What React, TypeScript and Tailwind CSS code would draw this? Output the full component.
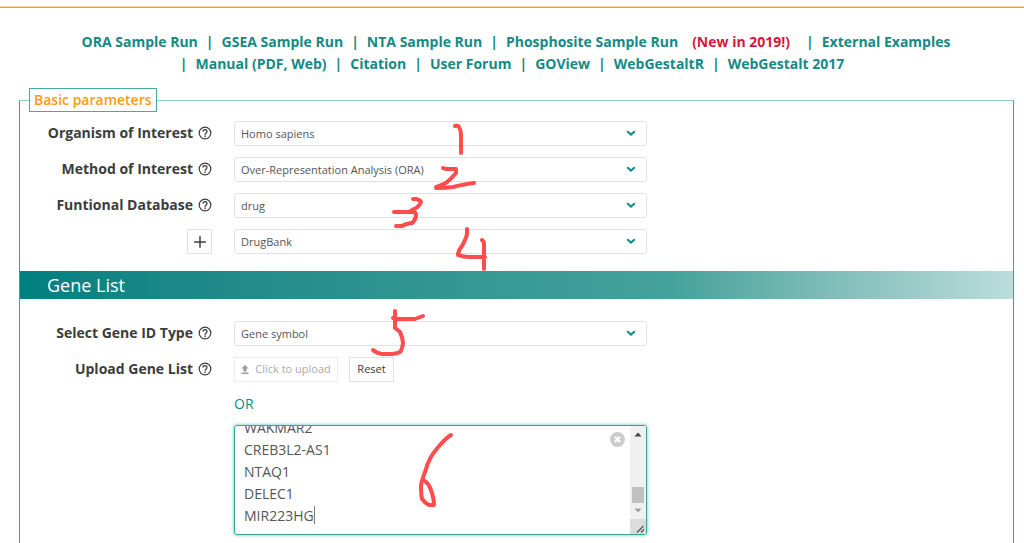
import { ReactNode, useEffect, useRef, useState } from "react";
import { Plus } from "lucide-react";

type FieldRowProps = {
  label?: string;
  htmlFor?: string;
  leading?: ReactNode;
  children: ReactNode;
};

type SelectFieldProps = {
  id: string;
  label: string;
  options: string[];
};

const SAMPLE_LINKS = ["ORA Sample Run", "GSEA Sample Run", "NTA Sample Run", "Phosphosite Sample Run"];
const RESOURCE_LINKS = ["Citation", "User Forum", "GOView", "WebGestaltR", "WebGestalt 2017"];
const GENES = ["WAKMAR2", "CREB3L2-AS1", "NTAQ1", "DELEC1", "MIR223HG"];

function Separator() {
  return <span aria-hidden="true">|</span>;
}

function TopNav() {
  return (
    <nav className="flex flex-col items-center pt-[23px] text-sm leading-[22px] font-bold text-[#148a84]">
      <div className="flex flex-wrap justify-center gap-x-2 pl-2">
        {SAMPLE_LINKS.map((name, index) => (
          <span key={name} className="flex gap-x-2">
            {index > 0 && <Separator />}
            <a href="#">{name}</a>
          </span>
        ))}
        <span className="mr-2 ml-[6px] text-[#dc143c]">(New in 2019!)</span>
        <Separator />
        <a href="#">External Examples</a>
      </div>
      <div className="flex flex-wrap justify-center gap-x-2">
        <Separator />
        <span>
          <a href="#">Manual</a> (<a href="#">PDF</a>, <a href="#">Web</a>)
        </span>
        {RESOURCE_LINKS.map((name) => (
          <span key={name} className="flex gap-x-2">
            <Separator />
            <a href="#">{name}</a>
          </span>
        ))}
      </div>
    </nav>
  );
}

function HelpIcon() {
  return (
    <svg viewBox="0 0 14 14" className="size-[14px] shrink-0" fill="none" stroke="currentColor">
      <circle cx="7" cy="7" r="5.8" strokeWidth="1.2" />
      <path d="M5 5.600a2 1.900 0 1 1 3.100 1.500Q7 7.700 7 8.700" strokeWidth="1.3" />
      <path d="M7 9.600v1.300" strokeWidth="1.3" />
    </svg>
  );
}

function FieldRow({ label, htmlFor, leading, children }: FieldRowProps) {
  return (
    <div className="grid grid-cols-[192px_minmax(0,413px)] items-center gap-x-[22px]">
      <div className="flex items-center justify-end">
        {leading}
        {label && (
          <div className="flex items-center gap-[5px] pb-[2px]">
            <label htmlFor={htmlFor} className="text-sm font-bold whitespace-nowrap">
              {label}
            </label>
            <HelpIcon />
          </div>
        )}
      </div>
      {children}
    </div>
  );
}

function Select({ id, label, options }: SelectFieldProps) {
  return (
    <div className="relative">
      <select
        id={id}
        aria-label={label}
        className="block h-[25px] w-full appearance-none rounded-[3px] border border-[#e2e2e2] bg-white pt-[2px] pr-8 pl-[6px] text-[11px] text-[#555]"
      >
        {options.map((option) => (
          <option key={option}>{option}</option>
        ))}
      </select>
      <svg
        viewBox="0 0 10 7"
        className="pointer-events-none absolute top-[9px] right-[11px] h-[7px] w-[10px] text-[#148a84]"
        fill="none"
        stroke="currentColor"
        strokeWidth="2"
      >
        <path d="M1.2 1.2 5 4.6 8.8 1.2" />
      </svg>
    </div>
  );
}

function GeneTextArea() {
  const [genes, setGenes] = useState(GENES.join("\n"));
  const areaRef = useRef<HTMLTextAreaElement>(null);

  // keep the end of the list in view
  useEffect(() => {
    if (areaRef.current) {
      areaRef.current.scrollTop = areaRef.current.scrollHeight;
    }
  }, []);

  return (
    <div className="relative flex h-[110px] overflow-hidden rounded-[3px] border border-[#3fa39d] shadow-[0_0_3px_1px_#a5d5d2]">
      <textarea
        id="gene-list"
        aria-label="Gene list"
        ref={areaRef}
        value={genes}
        onChange={(event) => setGenes(event.target.value)}
        spellCheck={false}
        className="h-full flex-1 resize-none overflow-hidden px-[9px] pt-1 pb-[7px] text-sm leading-[22px] text-[#555] outline-none"
      />
      <span className="absolute bottom-[10px] left-[79px] h-[18px] w-px bg-[#777]" />
      <button
        type="button"
        aria-label="Clear gene list"
        onClick={() => setGenes("")}
        className="absolute top-[6px] right-[21px]"
      >
        <svg viewBox="0 0 16 16" className="size-[15px]">
          <circle cx="8" cy="8" r="8" fill="#ccc" />
          <path d="m5.3 5.3 5.4 5.4m0-5.4-5.4 5.4" stroke="#fff" strokeWidth="2.4" />
        </svg>
      </button>
      <div className="flex w-4 flex-col items-center bg-[#f0f0f0]" aria-hidden="true">
        <svg viewBox="0 0 16 16" className="size-4">
          <path d="M4.5 10.5 8 6.5l3.500 4z" fill="#444" />
        </svg>
        <div className="mt-auto h-4 w-3 bg-[#c1c1c1]" />
        <svg viewBox="0 0 16 16" className="size-4">
          <path d="M4.500 5.500h7L8 9.500z" fill="#a0a0a0" />
        </svg>
        <div className="h-[15px] w-4 bg-[#dcdcdc]">
          <svg viewBox="0 0 16 15" className="h-[15px] w-4" stroke="#555" strokeWidth="1.3">
            <path d="M7 13.500 13.500 7M11 13.500l3-3" />
          </svg>
        </div>
      </div>
    </div>
  );
}

// Freehand step numbers drawn over the form
function StepMarks() {
  return (
    <svg
      viewBox="0 0 1024 543"
      className="pointer-events-none absolute top-0 left-0 h-[543px] w-[1024px]"
      fill="none"
      stroke="#ff0000"
      strokeOpacity="0.7"
      strokeWidth="4"
      strokeLinecap="round"
      strokeLinejoin="round"
    >
      <path d="M455 126q3-1 4 1 2 3 2 8v18" />
      <path d="M443 168q2 1 4 1h9v4q-4 5-10 10l-10 4v1q9 0 17-1 12-3 21-4" />
      <path d="M413 199h3q4 1 5 3-2 5-7 7l-5 3h-15 20q2 0 2 4-1 5-4 7-7 1-10 3h-6" />
      <path d="M467 229v5q-1 5-5 12-4 5-4 9 6 2 11 2h16M482 240q2 1 2 4v25" />
      <path d="M395 311v17q4 3 5 4 3 6 3 11-1 7-3 9-4 2-9 2h-9q-6-1-9-4M393 318q3 1 8 1h14l8-3" />
      <path d="M451 435q-5 3-11 10-7 8-9 12-4 7-6 15-3 8-4 13 0 9 1 14 3 4 7 6h5q0-6-3-15-2-6-6-9" />
    </svg>
  );
}

export default function App() {
  return (
    <div className="relative flex min-h-screen flex-col overflow-hidden bg-white font-['Open_Sans','Noto_Sans',sans-serif] text-[#3c3c3c]">
      <div className="mt-[6px] h-[2px] border-t border-[#ffd699] bg-[#ff9914]" />
      <TopNav />

      <form className="mt-[13px] flex grow flex-col pr-[10px] pl-[19px]">
        <fieldset className="grow border border-b-0 border-[#3f9f99] border-t-[#8fcac7]">
          <legend className="ml-[9px] border border-[#4ba9a4] px-1 text-sm leading-[22px] font-semibold text-[#ff9914]">
            Basic parameters
          </legend>

          <div className="flex flex-col gap-[11px] pt-[9px] pb-[17px]">
            <FieldRow label="Organism of Interest" htmlFor="organism">
              <Select id="organism" label="Organism of Interest" options={["Homo sapiens"]} />
            </FieldRow>
            <FieldRow label="Method of Interest" htmlFor="method">
              <Select
                id="method"
                label="Method of Interest"
                options={["Over-Representation Analysis (ORA)"]}
              />
            </FieldRow>
            <FieldRow label="Funtional Database" htmlFor="database">
              <Select id="database" label="Funtional Database" options={["drug"]} />
            </FieldRow>
            <FieldRow
              leading={
                <button
                  type="button"
                  aria-label="Add database"
                  className="flex size-[25px] items-center justify-center border border-[#e2e2e2]"
                >
                  <Plus className="size-[18px]" strokeWidth={2} />
                </button>
              }
            >
              <Select id="database-name" label="Database name" options={["DrugBank"]} />
            </FieldRow>
          </div>

          <h2 className="bg-linear-to-r from-[#008080] via-[#45a29c] via-[66%] to-[#bbdddb] pl-[27px] text-lg leading-[28px] font-medium text-white">
            Gene List
          </h2>

          <div className="flex flex-col gap-[11px] pt-[22px] pb-2">
            <FieldRow label="Select Gene ID Type" htmlFor="gene-id">
              <Select id="gene-id" label="Select Gene ID Type" options={["Gene symbol"]} />
            </FieldRow>
            <FieldRow label="Upload Gene List" htmlFor="gene-list">
              <div className="flex gap-[11px] text-[11px]">
                <button
                  type="button"
                  className="flex h-[25px] w-[104px] items-center justify-center gap-[6px] border border-[#ececec] text-[#aaa]"
                >
                  <svg viewBox="0 0 8 9" className="h-[9px] w-2" fill="#999">
                    <path d="M4 0 7.500 3.500H5.500V6.500h-3V3.500H.5zM.5 7.500h7V9h-7z" />
                  </svg>
                  Click to upload
                </button>
                <button type="reset" className="h-[25px] w-[45px] border border-[#e2e2e2]">
                  Reset
                </button>
              </div>
            </FieldRow>
            <FieldRow>
              <div>
                <p className="mb-[10px] text-sm leading-[22px] text-[#148a84]">OR</p>
                <GeneTextArea />
              </div>
            </FieldRow>
          </div>
        </fieldset>
      </form>

      <StepMarks />
    </div>
  );
}
